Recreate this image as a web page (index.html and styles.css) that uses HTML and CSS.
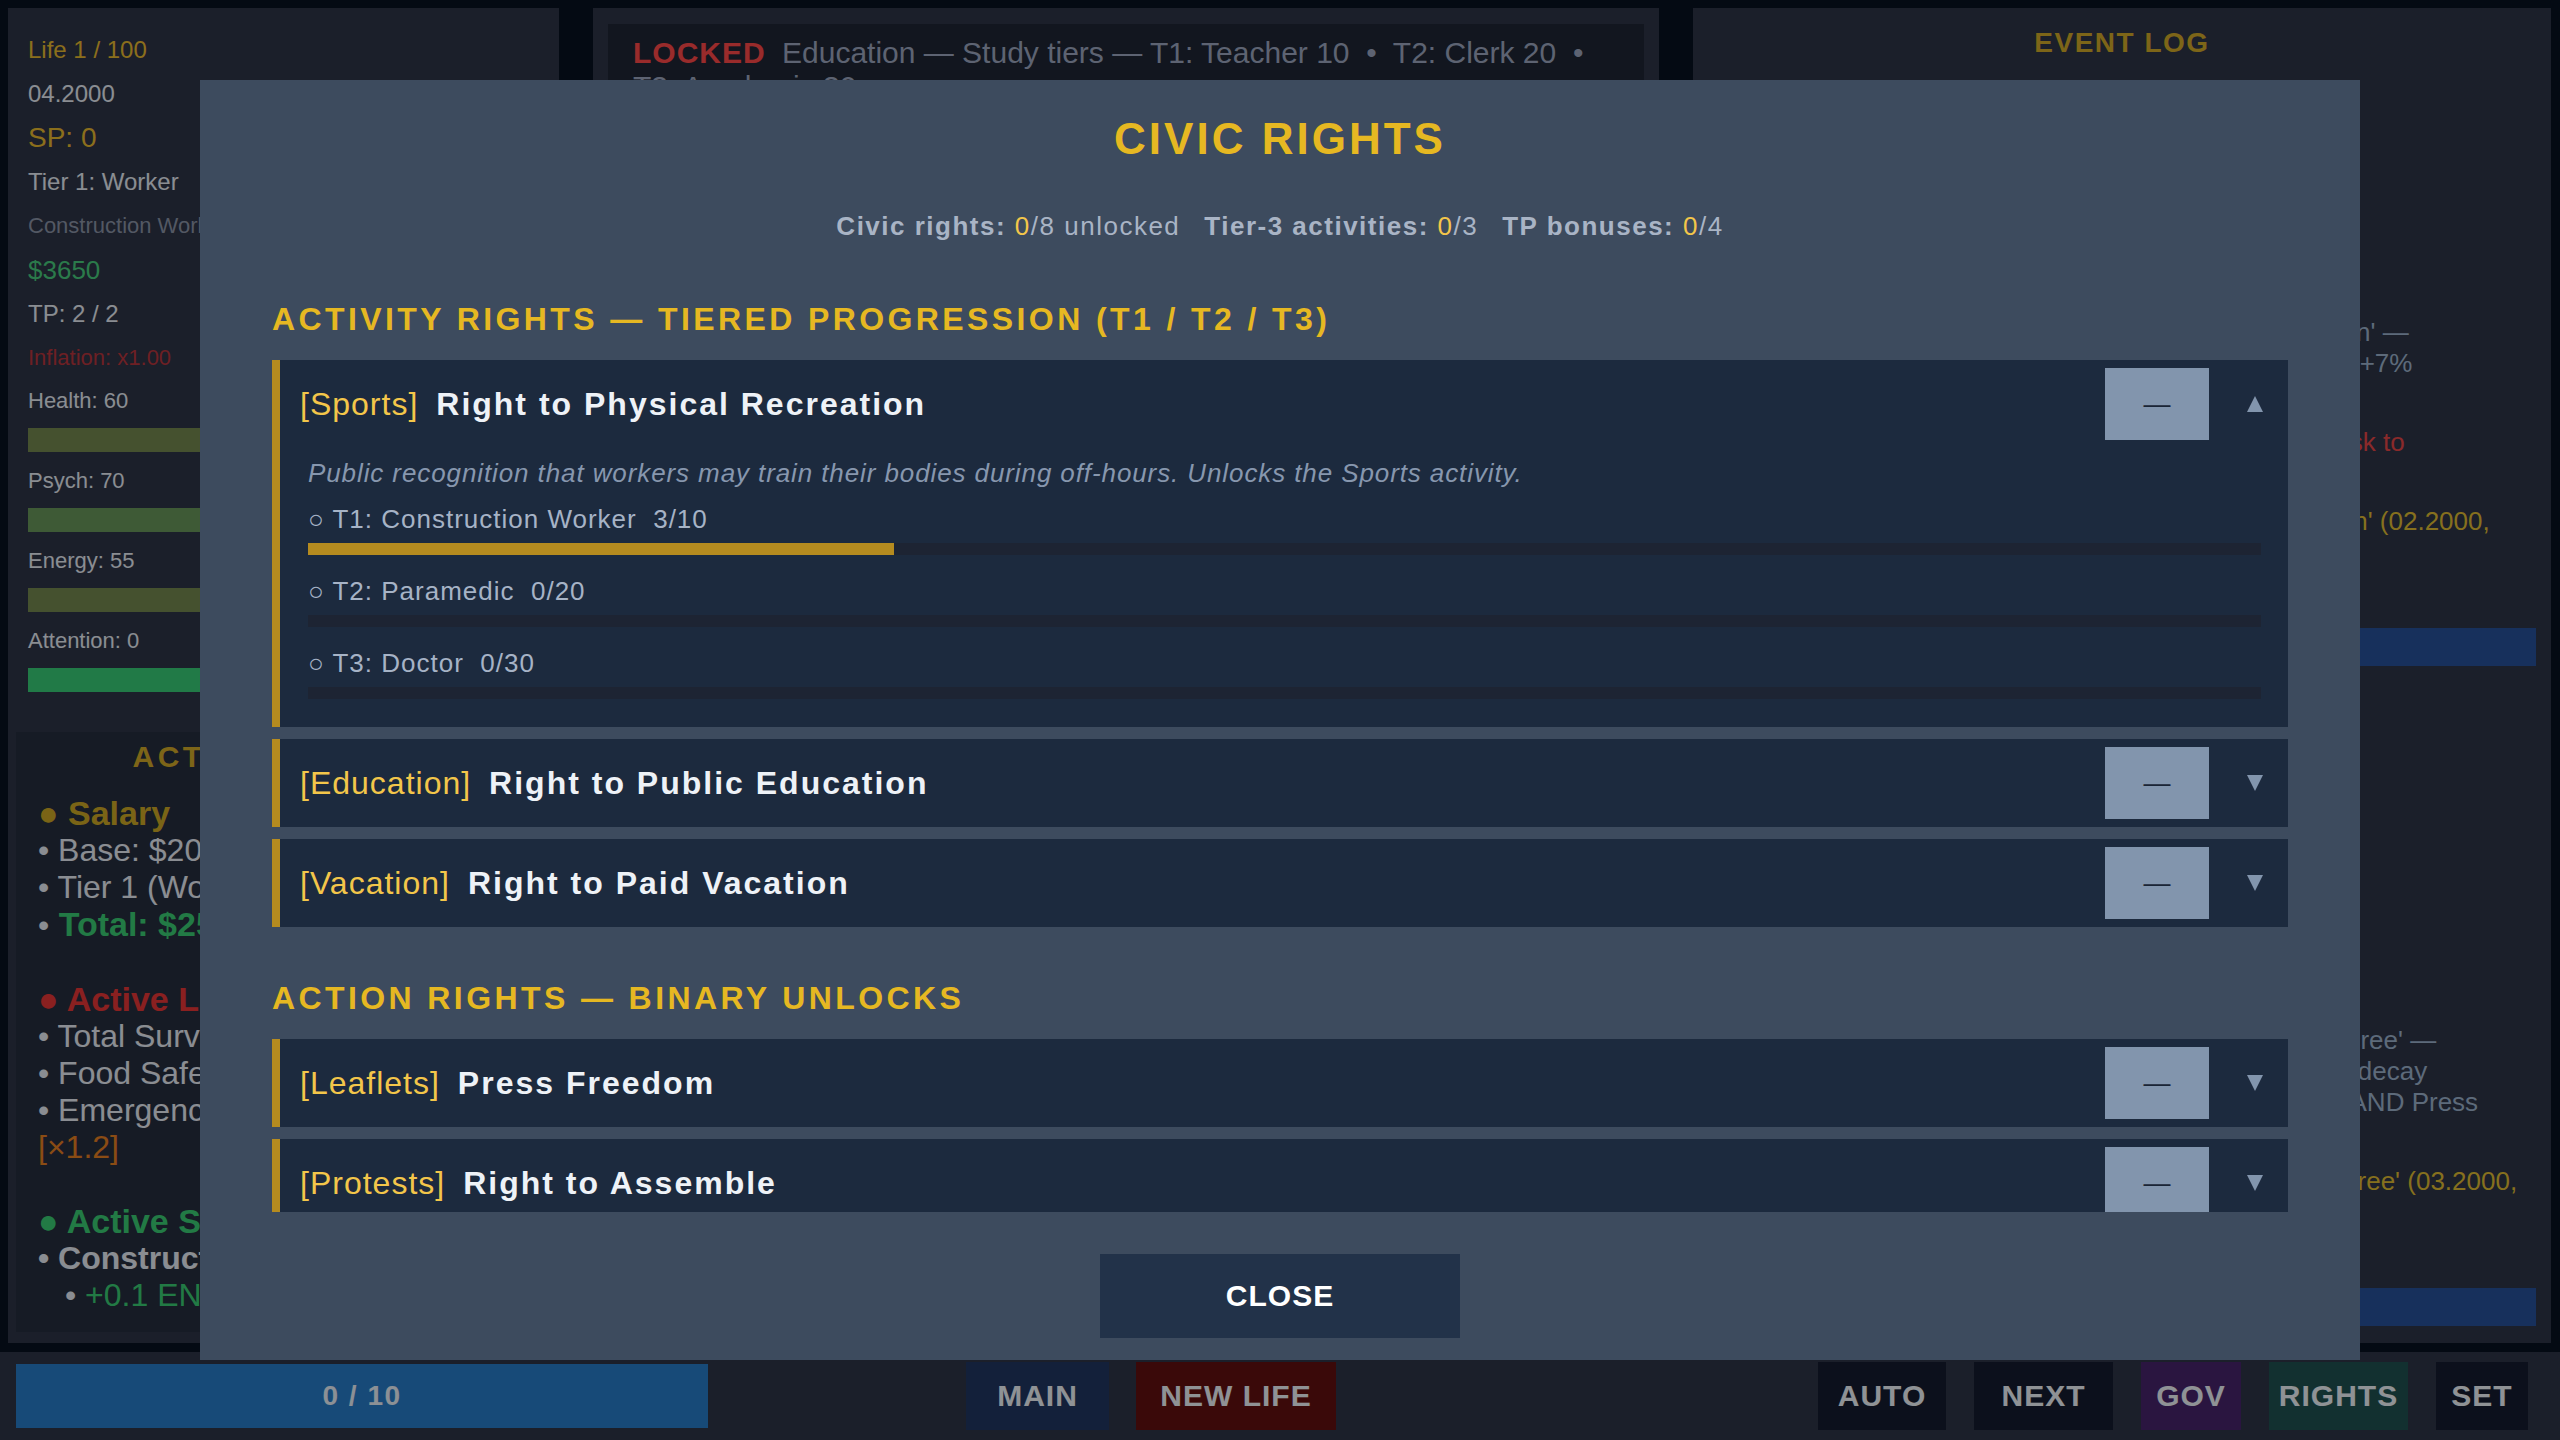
FILE: index.html
```html
<!DOCTYPE html>
<html lang="en">
<head>
    <meta charset="UTF-8">
    <meta name="viewport" content="width=device-width, initial-scale=1.0">
    <title>Civic Rights - Worker Life</title>
    <link rel="stylesheet" href="styles.css">
</head>
<body>
    <div class="game">
        <!-- character status -->
        <aside class="panel status">
            <div class="stat gold">Life 1 / 100</div>
            <div class="stat">04.2000</div>
            <div class="stat gold big">SP: 0</div>
            <div class="stat">Tier 1: Worker</div>
            <div class="stat dim">Construction Worker</div>
            <div class="stat green money">$3650</div>
            <div class="stat">TP: 2 / 2</div>
            <div class="stat red">Inflation: x1.00</div>

            <div class="meter">
                <div class="meter-label">Health: 60</div>
                <div class="meter-track"><div class="meter-fill olive" style="width:60%"></div></div>
            </div>
            <div class="meter">
                <div class="meter-label">Psych: 70</div>
                <div class="meter-track"><div class="meter-fill moss" style="width:70%"></div></div>
            </div>
            <div class="meter">
                <div class="meter-label">Energy: 55</div>
                <div class="meter-track"><div class="meter-fill olive" style="width:55%"></div></div>
            </div>
            <div class="meter">
                <div class="meter-label">Attention: 0</div>
                <div class="meter-track"><div class="meter-fill calm" style="width:100%"></div></div>
            </div>

            <section class="effects">
                <h3>ACTIVE EFFECTS</h3>
                <div class="fx-head salary"><span class="dot">●</span> Salary</div>
                <div class="fx"><span class="bullet">•</span> Base: $2000</div>
                <div class="fx"><span class="bullet">•</span> Tier 1 (Worker): +$500</div>
                <div class="fx total"><span class="bullet">•</span> Total: $2500</div>

                <div class="fx-head laws"><span class="dot">●</span> Active Laws</div>
                <div class="fx"><span class="bullet">•</span> Total Surveillance</div>
                <div class="fx"><span class="bullet">•</span> Food Safety Standards</div>
                <div class="fx"><span class="bullet">•</span> Emergency Curfew Ordinance <span class="mult">[×1.2]</span></div>

                <div class="fx-head skills"><span class="dot">●</span> Active Skills</div>
                <div class="fx strong"><span class="bullet">•</span> Construction Worker</div>
                <div class="fx sub"><span class="bullet">•</span> <span class="gain">+0.1 ENERGY / turn</span></div>
            </section>
        </aside>

        <!-- activities -->
        <main class="panel board">
            <div class="activity"><span class="locked">LOCKED</span> Education — Study tiers — T1: Teacher 10 &nbsp;•&nbsp; T2: Clerk 20 &nbsp;•&nbsp; T3: Academic 30</div>
            <div class="activity"><span class="open">OPEN</span> Work — Construction Worker — 3 shifts left this month</div>
            <div class="activity"><span class="locked">LOCKED</span> Sports — needs 'Right to Physical Recreation'</div>
        </main>

        <!-- event log -->
        <aside class="panel log">
            <h3>EVENT LOG</h3>
            <div class="log-list">
                <div class="log-entry">04.2000: Month ended. Salary paid:<br>+$2500 deposited.</div>
                <div class="log-entry">04.2000: Rent and food deducted:<br>−$1200.</div>
                <div class="log-entry">04.2000: Construction shift done.<br>Energy −12, Health −3.</div>
                <div class="log-entry">04.2000: Motion pending for 'Right to Physical Recreation' —<br>If granted, Sports activity unlocks for all workers. Morale +7%<br>once Parliament approves it.</div>
                <div class="log-entry warn">03.2000: Your activity is drawing attention. Police may ask to<br>see your papers.</div>
                <div class="log-entry note">03.2000: Petition drafted for 'Right to Physical Recreation' (02.2000,<br>signatures collected: 3 of 10,<br>review pending).</div>
                <div class="log-month">— 03.2000 —</div>
                <div class="log-entry">03.2000: Month ended. Salary paid:<br>+$2500 deposited.</div>
                <div class="log-entry">03.2000: Rent and food deducted:<br>−$1200.</div>
                <div class="log-entry">03.2000: Inflation check passed.<br>Prices unchanged (x1.00).</div>
                <div class="log-entry">03.2000: Construction shift done.<br>Energy −12, Health −3,<br>Psych −2.</div>
                <div class="log-entry">03.2000: Parliament is debating the 'Eight-Hour Day Decree' —<br>Workers may print leaflets and this greatly slows morale decay<br>Organized protests require both the 'Right to Assemble' AND Press<br>Freedom.</div>
                <div class="log-entry note">02.2000: Parliament has passed its 'Eight-Hour Day Decree' (03.2000,<br>effective next month). Energy<br>recovery +5.</div>
                <div class="log-month">— 02.2000 —</div>
            </div>
        </aside>
    </div>

    <footer class="bar">
        <div class="turns">0 / 10</div>
        <nav class="bar-mid">
            <button class="btn main">MAIN</button>
            <button class="btn new-life">NEW LIFE</button>
        </nav>
        <nav class="bar-right">
            <button class="btn auto">AUTO</button>
            <button class="btn next">NEXT</button>
            <button class="btn gov">GOV</button>
            <button class="btn rights">RIGHTS</button>
            <button class="btn set">SET</button>
        </nav>
    </footer>

    <div class="overlay"></div>

    <div class="modal">
        <h2 class="modal-title">CIVIC RIGHTS</h2>
        <p class="modal-stats"><span><b>Civic rights:</b> <em>0</em>/8 unlocked</span><span><b>Tier-3 activities:</b> <em>0</em>/3</span><span><b>TP bonuses:</b> <em>0</em>/4</span></p>

        <div class="modal-scroll">
            <h3 class="rights-section">ACTIVITY RIGHTS — TIERED PROGRESSION (T1 / T2 / T3)</h3>

            <div class="right-card">
                <div class="right-head">
                    <span class="right-tag">[Sports]</span>
                    <span class="right-name">Right to Physical Recreation</span>
                    <button class="right-toggle">—</button>
                    <svg class="right-caret" viewBox="0 0 16 16"><polygon points="8,0 16,16 0,16"/></svg>
                </div>
                <div class="right-body">
                    <p class="right-desc">Public recognition that workers may train their bodies during off-hours. Unlocks the Sports activity.</p>
                    <div class="tier">
                        <div class="tier-label">○ T1: Construction Worker&nbsp; 3/10</div>
                        <div class="tier-track"><div class="tier-fill" style="width:30%"></div></div>
                    </div>
                    <div class="tier">
                        <div class="tier-label">○ T2: Paramedic&nbsp; 0/20</div>
                        <div class="tier-track"><div class="tier-fill" style="width:0%"></div></div>
                    </div>
                    <div class="tier">
                        <div class="tier-label">○ T3: Doctor&nbsp; 0/30</div>
                        <div class="tier-track"><div class="tier-fill" style="width:0%"></div></div>
                    </div>
                </div>
            </div>

            <div class="right-card">
                <div class="right-head">
                    <span class="right-tag">[Education]</span>
                    <span class="right-name">Right to Public Education</span>
                    <button class="right-toggle">—</button>
                    <svg class="right-caret" viewBox="0 0 16 16"><polygon points="0,0 16,0 8,16"/></svg>
                </div>
            </div>

            <div class="right-card">
                <div class="right-head">
                    <span class="right-tag">[Vacation]</span>
                    <span class="right-name">Right to Paid Vacation</span>
                    <button class="right-toggle">—</button>
                    <svg class="right-caret" viewBox="0 0 16 16"><polygon points="0,0 16,0 8,16"/></svg>
                </div>
            </div>

            <h3 class="rights-section">ACTION RIGHTS — BINARY UNLOCKS</h3>

            <div class="right-card">
                <div class="right-head">
                    <span class="right-tag">[Leaflets]</span>
                    <span class="right-name">Press Freedom</span>
                    <button class="right-toggle">—</button>
                    <svg class="right-caret" viewBox="0 0 16 16"><polygon points="0,0 16,0 8,16"/></svg>
                </div>
            </div>

            <div class="right-card">
                <div class="right-head">
                    <span class="right-tag">[Protests]</span>
                    <span class="right-name">Right to Assemble</span>
                    <button class="right-toggle">—</button>
                    <svg class="right-caret" viewBox="0 0 16 16"><polygon points="0,0 16,0 8,16"/></svg>
                </div>
            </div>

            <div class="right-card">
                <div class="right-head">
                    <span class="right-tag">[Strikes]</span>
                    <span class="right-name">Right to Strike</span>
                    <button class="right-toggle">—</button>
                    <svg class="right-caret" viewBox="0 0 16 16"><polygon points="0,0 16,0 8,16"/></svg>
                </div>
            </div>

            <div class="right-card">
                <div class="right-head">
                    <span class="right-tag">[Unions]</span>
                    <span class="right-name">Freedom of Association</span>
                    <button class="right-toggle">—</button>
                    <svg class="right-caret" viewBox="0 0 16 16"><polygon points="0,0 16,0 8,16"/></svg>
                </div>
            </div>

            <div class="right-card">
                <div class="right-head">
                    <span class="right-tag">[Petitions]</span>
                    <span class="right-name">Right to Petition</span>
                    <button class="right-toggle">—</button>
                    <svg class="right-caret" viewBox="0 0 16 16"><polygon points="0,0 16,0 8,16"/></svg>
                </div>
            </div>
        </div>

        <div class="modal-foot">
            <button class="close-btn">CLOSE</button>
        </div>
    </div>
</body>
</html>
```

FILE: styles.css
```css
* {
    box-sizing: border-box;
}

body {
    margin: 0;
    height: 100vh;
    display: flex;
    flex-direction: column;
    overflow: hidden;
    background-color: #081121;
    font-family: "Liberation Sans", Arial, sans-serif;
    color: #e6ebf3;
}

button {
    font-family: inherit;
    cursor: pointer;
}

/* three columns behind the dialog */
.game {
    flex: 1;
    min-height: 0;
    display: grid;
    grid-template-columns: 551px 1066px 1fr;
    gap: 34px;
    padding: 8px 9px 9px 8px;
}

.panel {
    background-color: #2d3446;
    overflow: hidden;
}

/* status column */
.status {
    display: flex;
    flex-direction: column;
    padding: 20px 20px 11px;
}

.stat {
    font-size: 24px;
    line-height: 44px;
    color: #e6ebf3;
    white-space: nowrap;
}

.stat.big { font-size: 28px; }
.stat.money { font-size: 26px; }
.stat.gold { color: #e8b930; }
.stat.dim { color: #8a93a6; font-size: 22px; }
.stat.green { color: #48cc7d; }
.stat.red { color: #b8353c; font-size: 22px; }

.meter {
    margin-bottom: 8px;
}

.meter-label {
    font-size: 22px;
    line-height: 42px;
    padding-bottom: 6px;
    color: #e6ebf3;
}

.meter-track {
    height: 24px;
}

.meter-fill {
    height: 100%;
}

.meter-fill.olive { background-color: #73874f; }
.meter-fill.moss { background-color: #68965a; }
.meter-fill.calm { background-color: #37cc77; }

.effects {
    flex: 1;
    margin: 32px -12px 0;
    padding: 7px 20px 0 22px;
    background-color: #262d3e;
    font-size: 32px;
    line-height: 37px;
    white-space: nowrap;
}

.effects h3 {
    margin: 0 0 20px;
    text-align: center;
    font-size: 30px;
    line-height: 36px;
    letter-spacing: 3.5px;
    color: #d0a828;
}

.fx-head {
    font-size: 34px;
    font-weight: bold;
}

.fx + .fx-head {
    margin-top: 37px;
}

.fx-head.salary { color: #cca725; }
.fx-head.laws { color: #e63636; }
.fx-head.skills { color: #3acc73; }

.fx {
    color: #e6ebf3;
    white-space: normal;
}

.fx.total {
    font-size: 34px;
    color: #3acc73;
    font-weight: bold;
}

.fx.total .bullet {
    font-size: 32px;
    font-weight: normal;
    color: #e6ebf3;
}

.fx.strong {
    font-weight: bold;
}

.fx.sub {
    padding-left: 27px;
}

.gain { color: #3acc73; }
.mult { color: #e67f22; }

/* activity board */
.board {
    padding: 16px 15px;
}

.activity {
    background-color: #1e2534;
    padding: 12px 25px;
    margin-bottom: 12px;
    font-size: 30px;
    line-height: 34px;
    color: #9ba5be;
}

.locked {
    color: #ff4848;
    font-weight: bold;
    letter-spacing: 1px;
    margin-right: 8px;
}

.open {
    color: #48cc7d;
    font-weight: bold;
    letter-spacing: 1px;
    margin-right: 8px;
}

/* event log */
.log {
    padding: 18px 15px 0;
}

.log h3 {
    margin: 0 0 20px;
    text-align: center;
    font-size: 28px;
    line-height: 34px;
    letter-spacing: 1.5px;
    color: #d0a828;
}

.log-list {
    display: flex;
    flex-direction: column;
}

.log-entry {
    font-size: 26px;
    line-height: 31px;
    margin-bottom: 17px;
    color: #9bb1cb;
    white-space: nowrap;
}

.log-entry.warn { color: #e64646; }
.log-entry.note { color: #dfbb32; }

.log-month {
    height: 38px;
    margin: 12px 0;
    line-height: 38px;
    text-align: center;
    font-size: 22px;
    color: #c8d6ee;
    background-color: #27509a;
}

/* bottom bar */
.bar {
    height: 88px;
    display: flex;
    align-items: center;
    padding: 0 32px 0 16px;
    background-color: #2d3446;
}

.turns {
    width: 692px;
    height: 64px;
    line-height: 64px;
    text-align: center;
    font-size: 28px;
    font-weight: bold;
    letter-spacing: 1.5px;
    color: #e9f0f8;
    background-color: #277cc8;
}

.bar-mid {
    display: flex;
    gap: 27px;
    margin-left: 258px;
}

.bar-right {
    display: flex;
    gap: 28px;
    margin-left: auto;
}

.btn {
    height: 68px;
    padding: 0;
    border: none;
    font-size: 30px;
    font-weight: bold;
    letter-spacing: 1px;
    color: #eef3f9;
    background-color: #141c2f;
}

.btn.main { width: 143px; background-color: #203661; }
.btn.new-life { width: 200px; background-color: #611010; }
.btn.auto { width: 128px; }
.btn.next { width: 139px; }
.btn.gov { width: 100px; background-color: #46236b; }
.btn.rights { width: 139px; background-color: #1e5050; }
.btn.set { width: 92px; }

/* dialog */
.overlay {
    position: fixed;
    inset: 0;
    background-color: rgba(0, 0, 0, 0.4);
}

.modal {
    position: fixed;
    top: 80px;
    left: 200px;
    width: 2160px;
    height: 1280px;
    display: flex;
    flex-direction: column;
    padding: 33px 72px 22px;
    background-color: #3d4b5e;
}

.modal-title {
    margin: 0;
    text-align: center;
    font-size: 44px;
    line-height: 52px;
    letter-spacing: 3px;
    color: #e6b822;
}

.modal-stats {
    margin: 46px 0 24px;
    text-align: center;
    font-size: 26px;
    line-height: 31px;
    letter-spacing: 1.5px;
    color: #a9b4c5;
}

.modal-stats span + span {
    margin-left: 24px;
}

.modal-stats em {
    font-style: normal;
    color: #f3c64a;
}

.modal-scroll {
    flex: 1;
    min-height: 0;
    overflow-y: auto;
    scrollbar-width: none;
}

.rights-section {
    margin: 52px 0 22px;
    font-size: 32px;
    line-height: 38px;
    letter-spacing: 3.4px;
    color: #e6b822;
}

.rights-section:first-child {
    margin-top: 34px;
}

.right-card {
    background-color: #1c2a3e;
    border-left: 8px solid #b58b1f;
    margin-bottom: 12px;
}

.right-head {
    display: flex;
    align-items: center;
    height: 88px;
    padding: 0 25px 0 20px;
    font-size: 32px;
}

.right-tag {
    letter-spacing: 1px;
    color: #f3c64a;
    margin-right: 18px;
}

.right-name {
    font-weight: bold;
    letter-spacing: 2px;
    color: #eef2f7;
}

.right-toggle {
    margin-left: auto;
    width: 104px;
    height: 72px;
    padding: 0;
    border: none;
    font-size: 27px;
    color: #1a2536;
    background-color: #8295ad;
}

.right-caret {
    width: 16px;
    height: 16px;
    margin-left: 38px;
    fill: #8295ad;
}

.right-body {
    padding: 11px 27px 28px 28px;
}

.right-desc {
    margin: 0 0 17px;
    font-size: 26px;
    line-height: 29px;
    letter-spacing: 0.9px;
    font-style: italic;
    color: #8797ae;
}

.tier + .tier {
    margin-top: 22px;
}

.tier-label {
    font-size: 26px;
    line-height: 29px;
    letter-spacing: 1px;
    color: #a6b3c6;
}

.tier-track {
    height: 12px;
    margin-top: 9px;
    background-color: #1d2433;
}

.tier-fill {
    height: 100%;
    background-color: #b58b1f;
}

.modal-foot {
    display: flex;
    justify-content: center;
    padding-top: 42px;
}

.close-btn {
    width: 360px;
    height: 84px;
    border: none;
    font-size: 30px;
    font-weight: bold;
    letter-spacing: 1px;
    color: #ffffff;
    background-color: #223249;
}
```
